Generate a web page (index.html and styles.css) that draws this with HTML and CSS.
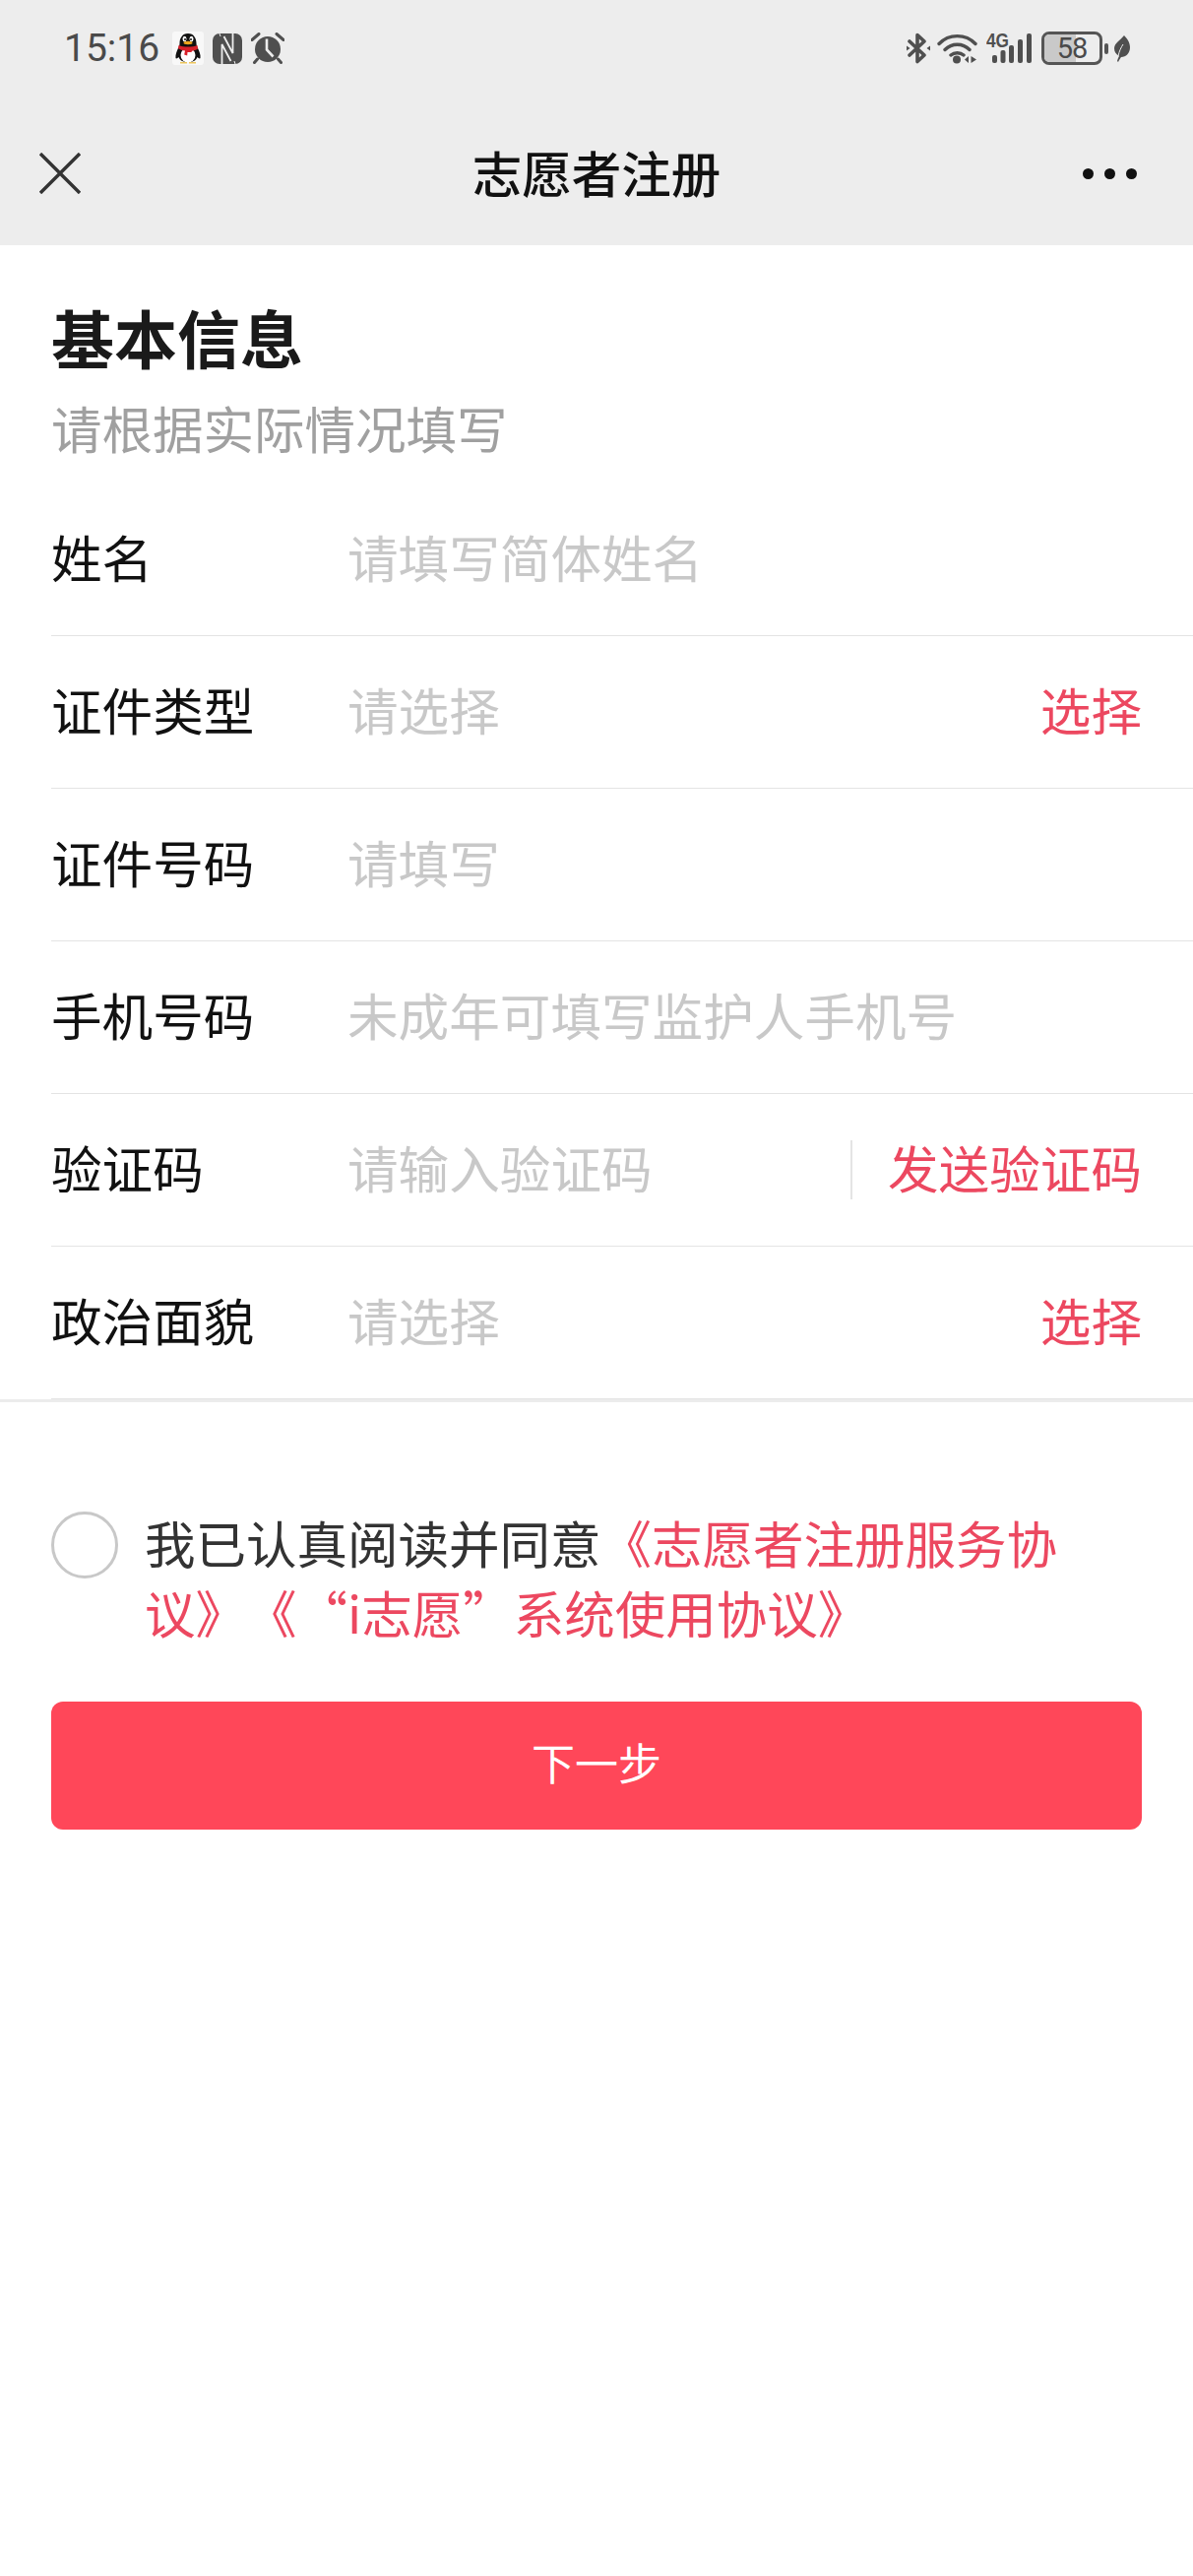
FILE: index.html
```html
<!DOCTYPE html>
<html lang="zh-CN">
<head>
  <meta charset="UTF-8" />
  <meta name="viewport" content="width=device-width, initial-scale=1.0" />
  <title>志愿者注册</title>
  <link rel="stylesheet" href="styles.css">
</head>
<body>
  <header class="top">
    <div class="status">
      <span class="time">15:16</span>
      <svg class="ic-qq" width="32" height="34" viewBox="0 0 32 34">
        <rect width="32" height="34" rx="3" fill="#f8f8f8"/>
        <path d="M16 2c-6 0-8.500 5-8.500 10 0 2-.5 3-1.500 5-1.500 3-3 7-2.500 10 .5 1 2 0 3-1 1 3 4 5 9.500 5s8.500-2 9.500-5c1 1 2.500 2 3 1 .5-3-1-7-2.500-10-1-2-1.500-3-1.500-5 0-5-2.500-10-8.500-10z" fill="#111"/>
        <ellipse cx="16" cy="24" rx="7.500" ry="7.500" fill="#fff"/>
        <path d="M6.500 14c5 2 14 2 19 0l.5 3.500c-2 1.500-4 2-6 2.200l-.5 1.300h-4l-.3 3.500-3-1 .8-4c-3-.2-5-1-7-2.200z" fill="#d8202a"/>
        <ellipse cx="12.500" cy="7.500" rx="2" ry="2.700" fill="#fff"/>
        <ellipse cx="19.500" cy="7.500" rx="2" ry="2.700" fill="#fff"/>
        <circle cx="13" cy="8" r="1" fill="#111"/>
        <circle cx="19" cy="8" r="1" fill="#111"/>
        <ellipse cx="16" cy="11.500" rx="4.500" ry="1.700" fill="#eea51c"/>
        <path d="M8 31h7v1.500H8zM17 31h7v1.500h-7z" fill="#eec65c"/>
      </svg>
      <svg class="ic-nfc" width="30" height="31" viewBox="0 0 30 31">
        <rect width="30" height="31" rx="7" fill="#4f4f4f"/>
        <path d="M9.500 31V11l9 17M20.500 0v20l-9-17" stroke="#ededed" stroke-width="1.800" fill="none"/>
        <path d="M7 0L8 3M23 31l-1-3" stroke="#ededed" stroke-width="1" fill="none"/>
      </svg>
      <svg class="ic-alarm" width="34" height="32" viewBox="0 0 34 32">
        <circle cx="17" cy="17" r="13" fill="#4f4f4f"/>
        <path d="M1 7.500L8 1.500M33 7.500L26 1.500M6.500 27L3.500 30.500M27.500 27l3 3.500" stroke="#4f4f4f" stroke-width="3" stroke-linecap="round"/>
        <path d="M16 6.500v11l6.500 7" stroke="#ededed" stroke-width="2.600" fill="none"/>
      </svg>
      <span class="status-gap"></span>
      <svg class="ic-bt" width="24" height="32" viewBox="0 0 24 32">
        <path d="M3 9l15 14-7 6.500V2.500L18 9 3 23" stroke="#4f4f4f" stroke-width="3.600" fill="none" stroke-linejoin="round" stroke-linecap="round"/>
        <path d="M0 13.500l3.500 2.500L0 18.500zM24 13.500L20.500 16l3.500 2.500z" fill="#4f4f4f"/>
      </svg>
      <svg class="ic-wifi" width="41" height="32" viewBox="0 0 41 32">
        <path d="M2 11.500C12 1 29 1 39 11.500M8 17.500c7-7 18-7 25 0M14 23c3.500-3 9.500-3 13 0" stroke="#4f4f4f" stroke-width="3.400" fill="none" stroke-linecap="round"/>
        <circle cx="20" cy="27.500" r="4" fill="#4f4f4f"/>
        <path d="M32 24v7l-4-3.500zM34.500 24v7l5.500-3.500z" fill="#4f4f4f"/>
      </svg>
      <svg class="ic-signal" width="47" height="40" viewBox="0 -4 47 40">
        <text class="net" x="0" y="15" textLength="23" lengthAdjust="spacingAndGlyphs">4G</text>
        <rect x="6" y="23" width="5" height="8" rx="2" fill="#4f4f4f"/>
        <rect x="14.500" y="18" width="5" height="13" rx="2" fill="#4f4f4f"/>
        <rect x="23" y="13" width="5" height="18" rx="2" fill="#4f4f4f"/>
        <rect x="32" y="7" width="5" height="24" rx="2" fill="#4f4f4f"/>
        <rect x="41" y="1" width="5" height="30" rx="2" fill="#4f4f4f"/>
      </svg>
      <div class="battery"><span class="battery-fill"></span><span class="battery-num">58</span></div>
      <span class="battery-nub"></span>
      <svg class="ic-leaf" width="17" height="27" viewBox="0 0 17 27">
        <path d="M11 0c3 3 6 7 6 12 0 6-4 10-9 10-1 1-2 3-3 5l-1-1c.5-2 1-3 2-5-3-2-5-4-5-8C1 8 7 5 11 0z" fill="#4f4f4f"/>
        <path d="M5 21c1-5 3-9 5-12" stroke="#ededed" stroke-width="1" fill="none"/>
      </svg>
    </div>
    <div class="nav">
      <svg class="nav-close" width="42" height="42" viewBox="0 0 42 42">
        <path d="M1 1l40 40M41 1L1 41" stroke="#333" stroke-width="3.400"/>
      </svg>
      <span class="nav-title">志愿者注册</span>
      <div class="nav-more"><i></i><i></i><i></i></div>
    </div>
  </header>

  <main>
    <section class="intro">
      <h1>基本信息</h1>
      <p>请根据实际情况填写</p>
    </section>

    <div class="form">
      <div class="row">
        <label>姓名</label>
        <span class="hint">请填写简体姓名</span>
      </div>
      <div class="row">
        <label>证件类型</label>
        <span class="hint">请选择</span>
        <a class="act">选择</a>
      </div>
      <div class="row">
        <label>证件号码</label>
        <span class="hint">请填写</span>
      </div>
      <div class="row">
        <label>手机号码</label>
        <span class="hint">未成年可填写监护人手机号</span>
      </div>
      <div class="row">
        <label>验证码</label>
        <span class="hint">请输入验证码</span>
        <a class="act act-code">发送验证码</a>
      </div>
      <div class="row">
        <label>政治面貌</label>
        <span class="hint">请选择</span>
        <a class="act">选择</a>
      </div>
    </div>

    <div class="agree">
      <span class="radio"></span>
      <p>我已认真阅读并同意<a>《志愿者注册服务协议》《“i志愿”系统使用协议》</a></p>
    </div>

    <button class="next">下一步</button>
  </main>
</body>
</html>
```

FILE: styles.css
```css
* {
  box-sizing: border-box;
}
body {
  margin: 0;
  background: #fff;
  font-family: "Noto Sans CJK SC", "Noto Sans", sans-serif;
  color: #111;
}
svg {
  display: block;
  flex: none;
}

/* top bar */
.top {
  height: 249px;
  background: #ededed;
}
.status {
  display: flex;
  align-items: center;
  height: 98px;
  padding: 0 64px 0 65px;
}
.time {
  font-family: Roboto, sans-serif;
  font-size: 39px;
  color: #4a4a4a;
  width: 110px;
}
.ic-nfc { margin-left: 9px; }
.ic-alarm { margin-left: 9px; }
.status-gap { flex: 1; }
.ic-wifi { margin-left: 7px; }
.ic-signal { margin-left: 9px; }
.net {
  font-family: "Liberation Sans", sans-serif;
  font-size: 20px;
  font-weight: bold;
  fill: #4f4f4f;
}
.battery {
  position: relative;
  width: 62px;
  height: 34px;
  margin-left: 9px;
  border: 3px solid #555;
  border-radius: 8px;
  overflow: hidden;
  display: flex;
  align-items: center;
  justify-content: center;
}
.battery-fill {
  position: absolute;
  left: 0;
  top: 0;
  bottom: 0;
  width: 58%;
  background: #c9c9c9;
}
.battery-num {
  position: relative;
  font-family: Roboto, sans-serif;
  font-size: 29px;
  letter-spacing: -1px;
  line-height: 1;
  color: #4a4a4a;
}
.battery-nub {
  width: 4px;
  height: 11px;
  margin-left: 2px;
  background: #555;
  border-radius: 2px;
}
.ic-leaf { margin-left: 5px; }

.nav {
  display: flex;
  align-items: center;
  justify-content: space-between;
  height: 158px;
  padding: 0 57px 0 40px;
  margin-top: -1px;
  position: relative;
}
.nav-title {
  position: absolute;
  left: 0;
  right: 0;
  text-align: center;
  font-size: 50.500px;
  font-weight: 500;
  color: #111;
  padding-bottom: 4px;
}
.nav-more {
  display: flex;
  gap: 11px;
}
.nav-more i {
  width: 11px;
  height: 11px;
  border-radius: 50%;
  background: #111;
}

/* heading */
.intro {
  padding: 50px 52px 21px;
}
.intro h1 {
  margin: 0;
  font-size: 64px;
  line-height: 84px;
  font-weight: 700;
  color: #1a1a1a;
}
.intro p {
  margin: 15px 0 0;
  font-size: 51.500px;
  line-height: 72px;
  color: #a0a0a0;
}

/* form */
.form {
  border-bottom: 3px solid #ececec;
}
.row {
  display: flex;
  align-items: center;
  height: 155px;
  margin-left: 52px;
  padding: 0 52px 7px 0;
  border-bottom: 1px solid #e4e4e4;
  font-size: 51.600px;
}
.row label {
  width: 301px;
  flex: none;
  color: #111;
}
.hint {
  flex: 1;
  color: #c8c8c8;
}
.act {
  color: #ec4860;
}
.act-code {
  display: flex;
  align-items: center;
  height: 60px;
  padding-left: 36px;
  border-left: 2px solid #e4e4e4;
  margin-bottom: -7px;
  padding-bottom: 7px;
}

/* agreement */
.agree {
  display: flex;
  align-items: flex-start;
  gap: 27px;
  padding: 111px 80px 0 52px;
}
.radio {
  flex: none;
  width: 68px;
  height: 68px;
  border: 3px solid #c8c8c8;
  border-radius: 50%;
}
.agree p {
  margin: -5px 0 0;
  font-size: 51.500px;
  line-height: 71px;
  color: #333;
  font-kerning: none;
  text-spacing-trim: space-all;
  word-break: break-all;
}
.agree a {
  color: #ec4860;
}

.next {
  display: block;
  width: 1108px;
  height: 130px;
  margin: 56px 52px 0;
  padding: 0 0 8px;
  border: none;
  border-radius: 12px;
  background: #ff4759;
  color: #fff;
  font-family: inherit;
  font-size: 44px;
}
```
